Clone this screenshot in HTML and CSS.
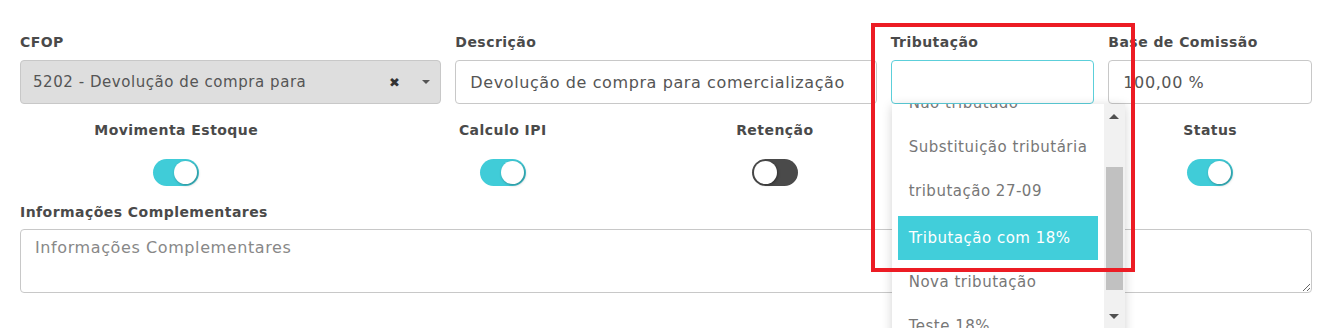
FILE: index.html
```html
<!DOCTYPE html>
<html lang="pt-BR">

    <head>
        <meta charset="UTF-8">
        <meta name="viewport" content="width=device-width, initial-scale=1.0">
        <title>CFOP</title>
        <link rel="stylesheet" href="styles.css">
    </head>

    <body>
        <main class="form">
            <div class="form_row">
                <div class="field col-4">
                    <label class="field_label">CFOP</label>
                    <div class="select select-disabled">
                        <span class="select_value">5202 - Devolução de compra para</span>
                        <span class="select_clear">&#10006;</span>
                        <span class="select_caret"></span>
                    </div>
                </div>
                <div class="field col-4">
                    <label class="field_label">Descrição</label>
                    <input class="input" type="text" value="Devolução de compra para comercialização">
                </div>
                <div class="field col-2 field-open">
                    <label class="field_label">Tributação</label>
                    <input class="input input-focus" type="text" value="">
                    <div class="dropdown">
                        <ul class="dropdown_list" role="list">
                            <li>Não tributado</li>
                            <li>Substituição tributária</li>
                            <li>tributação 27-09</li>
                            <li class="is-active">Tributação com 18%</li>
                            <li>Nova tributação</li>
                            <li>Teste 18%</li>
                        </ul>
                        <div class="dropdown_scroll">
                            <span class="scroll_up"></span>
                            <span class="scroll_thumb"></span>
                            <span class="scroll_down"></span>
                        </div>
                    </div>
                    <div class="highlight"></div>
                </div>
                <div class="field col-2">
                    <label class="field_label">Base de Comissão</label>
                    <input class="input" type="text" value="100,00 %">
                </div>
            </div>

            <div class="form_row toggles">
                <div class="toggle col-3">
                    <span class="field_label">Movimenta Estoque</span>
                    <span class="switch is-on"></span>
                </div>
                <div class="toggle col-3">
                    <span class="field_label">Calculo IPI</span>
                    <span class="switch is-on"></span>
                </div>
                <div class="toggle col-2">
                    <span class="field_label">Retenção</span>
                    <span class="switch"></span>
                </div>
                <div class="toggle col-2">
                    <span class="field_label">Ativo</span>
                    <span class="switch is-on"></span>
                </div>
                <div class="toggle col-2">
                    <span class="field_label">Status</span>
                    <span class="switch is-on"></span>
                </div>
            </div>

            <div class="field field-full">
                <label class="field_label">Informações Complementares</label>
                <textarea class="input textarea" placeholder="Informações Complementares"></textarea>
            </div>
        </main>
    </body>

</html>
```

FILE: styles.css
```css
* {
    box-sizing: border-box;
    margin: 0;
    padding: 0;
}

html,
body {
    height: 100%;
    overflow: hidden;
}

body {
    font-family: 'DejaVu Sans', 'Open Sans', sans-serif;
    font-size: 15px;
    color: #555;
    background-color: #fff;
}

ul {
    list-style: none;
}

.form {
    padding: 33px 29px 0 20px;
}

.form_row {
    display: grid;
    grid-template-columns: repeat(12, 1fr);
    column-gap: 14px;
}

.col-2 { grid-column: span 2; }
.col-3 { grid-column: span 3; }
.col-4 { grid-column: span 4; }

.field {
    position: relative;
    display: flex;
    flex-direction: column;
}

.field_label {
    display: block;
    font-weight: 700;
    font-size: 14px;
    line-height: 18px;
    color: #4a4a4a;
    letter-spacing: 0.45px;
    margin-bottom: 9px;
}

.input {
    height: 44px;
    width: 100%;
    padding: 0 14px;
    font-family: inherit;
    font-size: 16px;
    letter-spacing: 0.6px;
    color: #555;
    border: 1px solid #c8c8c8;
    border-radius: 4px;
    background: #fff;
    outline: none;
}

.input-focus {
    border-color: #5ccfda;
}

.select {
    height: 44px;
    display: flex;
    align-items: center;
    padding: 0 10px 0 12px;
    border: 1px solid #c8c8c8;
    border-radius: 4px;
    font-size: 15px;
    letter-spacing: 0.55px;
}

.select-disabled {
    background-color: #dedede;
}

.select_value {
    flex: 1;
    white-space: nowrap;
}

.select_clear {
    font-size: 13px;
    color: #333;
    margin-right: 22px;
}

.select_caret {
    width: 0;
    height: 0;
    border-left: 4px solid transparent;
    border-right: 4px solid transparent;
    border-top: 4px solid #555;
}

.toggles {
    margin-top: 17px;
}

.toggle {
    display: flex;
    flex-direction: column;
    align-items: center;
}

.toggle .field_label {
    margin-bottom: 20px;
}

.switch {
    position: relative;
    width: 46px;
    height: 27px;
    border-radius: 14px;
    background-color: #4a4a4a;
}

.switch::after {
    content: "";
    position: absolute;
    top: 2px;
    left: 2px;
    width: 23px;
    height: 23px;
    border-radius: 50%;
    background: #fff;
    box-shadow: 1px 1px 3px rgba(0, 0, 0, 0.35);
}

.switch.is-on {
    background-color: #40ccd8;
}

.switch.is-on::after {
    left: auto;
    right: 2px;
}

.field-full {
    margin-top: 17px;
}

.field-full .field_label {
    margin-bottom: 8px;
}

.textarea {
    height: 64px;
    padding: 8px 14px;
    resize: vertical;
    line-height: 20px;
}

.textarea::placeholder {
    color: #888;
}

/* open dropdown of Tributação */
.dropdown {
    position: absolute;
    top: 71px;
    left: 1px;
    width: 233px;
    height: 240px;
    display: flex;
    background: #fff;
    box-shadow: 0 2px 10px rgba(0, 0, 0, 0.18);
    overflow: hidden;
    z-index: 2;
}

.dropdown_list {
    flex: 1;
    padding: 0 6px;
    margin-top: -23px;
}

.dropdown_list li {
    height: 44px;
    line-height: 44px;
    padding-left: 11px;
    font-size: 15px;
    letter-spacing: 0.5px;
    color: #777;
    white-space: nowrap;
}

.dropdown_list li.is-active {
    margin-top: 3px;
    background-color: #41ceda;
    color: #fff;
}

.dropdown_scroll {
    position: relative;
    width: 21px;
    background-color: #f1f1f1;
}

.scroll_up,
.scroll_down {
    position: absolute;
    left: 5px;
    width: 0;
    height: 0;
    border-left: 5px solid transparent;
    border-right: 5px solid transparent;
}

.scroll_up {
    top: 10px;
    border-bottom: 5px solid #505050;
}

.scroll_down {
    top: 210px;
    border-top: 5px solid #505050;
}

.scroll_thumb {
    position: absolute;
    left: 2px;
    right: 2px;
    top: 63px;
    height: 123px;
    background-color: #c1c1c1;
}

.highlight {
    position: absolute;
    top: -10px;
    left: -20px;
    width: 264px;
    height: 249px;
    border: 4px solid #ec1c24;
    z-index: 3;
    pointer-events: none;
}
```
